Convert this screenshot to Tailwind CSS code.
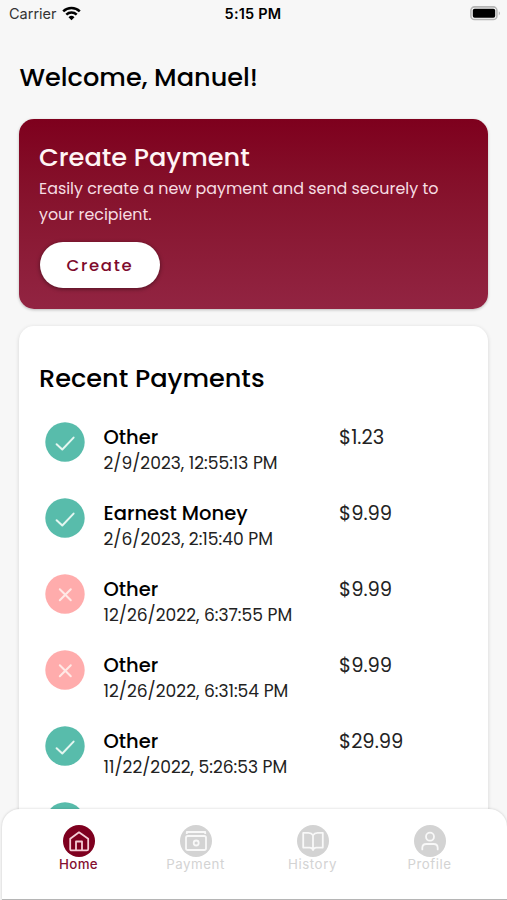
<!DOCTYPE html>
<html lang="en">
<head>
<meta charset="utf-8">
<title>Payments</title>
<script src="https://cdn.jsdelivr.net/npm/@tailwindcss/browser@4"></script>
</head>
<body class="w-[507px] h-[900px] overflow-hidden bg-[#f7f7f7] font-[Poppins,Inter,sans-serif] text-black">
<svg class="hidden">
  <symbol id="ok" viewBox="0 0 40 40"><circle cx="20" cy="20" r="19.7" fill="#58bcab"/><path d="M11.6 22.2l5.7 5.3L28.600 15.600" fill="none" stroke="#e4f6f0" stroke-width="2" stroke-linecap="round" stroke-linejoin="round"/></symbol>
  <symbol id="bad" viewBox="0 0 40 40"><circle cx="20" cy="20" r="19.7" fill="#ffacac"/><path d="M14.800 15.300l11 11M25.800 15.300l-11 11" fill="none" stroke="#ffe9e6" stroke-width="2" stroke-linecap="round"/></symbol>
</svg>
<div class="relative h-[900px] flex flex-col">
  <header class="h-7 shrink-0 grid grid-cols-3 items-center pl-[9px] pr-[6px] font-[Inter,sans-serif]">
    <div class="flex items-center gap-1.5"><span class="text-[14.5px] leading-7 text-[#333]">Carrier</span>
      <svg class="w-[19px] h-[15px] -mt-0.5 -ml-px" viewBox="0 0 19 15" fill="none" stroke="#000" stroke-width="2.500"><path d="M1.200 5.400a12 12 0 0 1 16.600 0M4.300 8.700a7.500 7.500 0 0 1 10.400 0"/><path d="M9.500 14.200L6.500 11.200a4.300 4.300 0 0 1 6 0z" fill="#000" stroke="none"/></svg>
    </div>
    <div class="text-center text-[14.5px] leading-7 font-semibold tracking-[0.2px] -ml-1">5:15 PM</div>
    <svg class="w-[31px] h-[15px] justify-self-end -mt-0.5" viewBox="0 0 31 15"><rect x=".9" y=".9" width="26" height="12.600" rx="3.600" fill="#f7f7f7" stroke="#b5b5b5" stroke-width="1.600"/><rect x="2.800" y="2.700" width="22.400" height="9" rx="1.800"/><path d="M28.800 5.200q2.200 2 0 4.200z" fill="#aaa"/></svg>
  </header>
  <main class="px-[19px] flex flex-col">
    <h1 class="mt-[31px] h-9 leading-9 text-[25.6px] font-medium pl-[0.5px]">Welcome, Manuel!</h1>
    <section class="mt-6 h-[190px] rounded-[15px] bg-linear-to-b from-[#7e001d] to-[#922442] px-5 pt-[20px] text-white shadow-[0_1px_3px_rgba(0,0,0,0.25)]">
      <h2 class="h-9 leading-9 text-[25.6px] font-medium text-[#fff4f4]">Create Payment</h2>
      <p class="pt-px leading-[25.5px] text-[15.9px] text-[#f6dde2]">Easily create a new payment and send securely to<br>your recipient.</p>
      <button class="mt-[15px] ml-px w-[120px] h-[46px] pt-0.5 rounded-full bg-white text-[#7e0a2c] text-[16.5px] font-medium tracking-[1.7px] shadow-[0_1px_4px_rgba(0,0,0,0.45)]">Create</button>
    </section>
    <section class="mt-[17px] h-[600px] rounded-[15px] bg-white px-5 pt-[34px] shadow-[0_1px_4px_rgba(0,0,0,0.14)]">
      <h2 class="h-9 leading-[37px] text-[25.6px] font-medium">Recent Payments</h2>
      <ul id="list" class="mt-[26px] flex flex-col"></ul>
    </section>
  </main>
  <nav class="absolute left-[1.5px] right-[0.5px] top-[808.5px] bottom-0 rounded-t-[18px] bg-white grid grid-cols-4 px-[18.5px] pt-4 font-[Inter,sans-serif] text-[13.3px] tracking-[0.55px] text-[#d3d3d3] shadow-[0_0_3px_rgba(0,0,0,0.18)] border-b border-[#b5b5b5]">
    <div class="flex flex-col items-center text-[#860f30]"><svg class="size-8" viewBox="0 0 32 32" fill="none" stroke="#f5cdd6" stroke-width="1.8" stroke-linejoin="round"><circle cx="16" cy="16" r="16" fill="#7e001f" stroke="none"/><path d="M7.200 13.800L16 7.300l9.200 6.500V24q0 1.400-1.400 1.400H8.600Q7.200 25.400 7.200 24z"/><path d="M13 25.200V16.500h6v8.700"/></svg><span class="leading-[15px] font-medium tracking-[0.3px]">Home</span></div>
    <div class="flex flex-col items-center"><svg class="size-8" viewBox="0 0 32 32" fill="none" stroke="#f8f8f8" stroke-width="1.8" stroke-linejoin="round"><circle cx="16" cy="16" r="16" fill="#d3d3d3" stroke="none"/><rect x="6" y="11" width="20" height="14" rx="1.800"/><path d="M6.800 9V7H25.200V9"/><circle cx="16.200" cy="18" r="2.500"/></svg><span class="leading-[15px]">Payment</span></div>
    <div class="flex flex-col items-center"><svg class="size-8" viewBox="0 0 32 32" fill="none" stroke="#f8f8f8" stroke-width="1.8" stroke-linejoin="round"><circle cx="16" cy="16" r="16" fill="#d3d3d3" stroke="none"/><path d="M16 10.200Q14.500 7.800 11.500 7.800H6.200V22.600H12.500Q15.500 22.600 16 25Q16.500 22.600 19.500 22.600H25.800V7.800H20.500Q17.500 7.800 16 10.200V25"/></svg><span class="leading-[15px]">History</span></div>
    <div class="flex flex-col items-center"><svg class="size-8" viewBox="0 0 32 32" fill="none" stroke="#f8f8f8" stroke-width="1.8" stroke-linecap="round"><circle cx="16" cy="16" r="16" fill="#d3d3d3" stroke="none"/><circle cx="16" cy="11.700" r="4"/><path d="M8.300 24.400V23Q8.300 19 12.300 19H19.700Q23.700 19 23.700 23V24.400"/></svg><span class="leading-[15px]">Profile</span></div>
  </nav>
</div>
<script>
const rows=[['ok','Other','2/9/2023, 12:55:13 PM','$1.23'],['ok','Earnest Money','2/6/2023, 2:15:40 PM','$9.99'],['bad','Other','12/26/2022, 6:37:55 PM','$9.99'],['bad','Other','12/26/2022, 6:31:54 PM','$9.99'],['ok','Other','11/22/2022, 5:26:53 PM','$29.99'],['ok','','','']];
document.getElementById('list').innerHTML=rows.map(([i,n,d,a])=>`<li class="h-[76.1px] flex items-start"><svg class="size-10 ml-[5.5px] -mt-[0.3px]"><use href="#${i}"/></svg><div class="ml-[19px] w-[235.5px] flex flex-col"><span class="h-[26px] leading-[31px] text-[19.5px] font-medium">${n}</span><span class="leading-[30px] text-[17.1px] text-[#222]">${d}</span></div><span class="leading-[31px] text-[19.5px] text-[#222]">${a}</span></li>`).join('');
</script>
</body>
</html>
